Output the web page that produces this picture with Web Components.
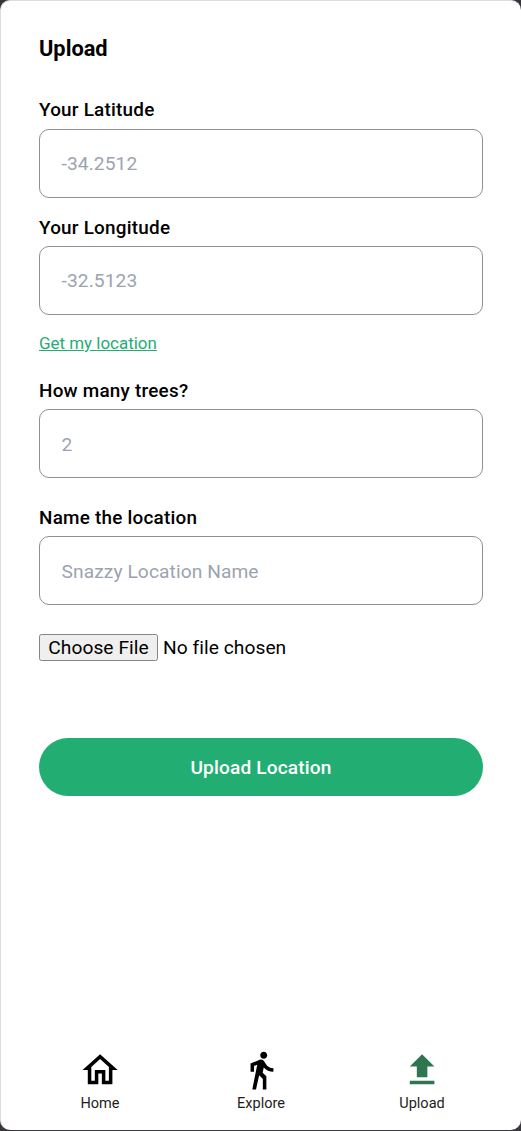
<!DOCTYPE html>
<html lang="en">
<head>
<meta charset="utf-8">
<title>Upload</title>
<style>
html,body{margin:0;height:100%;background:#38363a;font-family:Roboto,"Liberation Sans",sans-serif;color:#000}
</style>
</head>
<body>
<upload-screen></upload-screen>
<script>
function define(name, html){
  const t=document.createElement('template');
  t.innerHTML=html;
  customElements.define(name, class extends HTMLElement{
    constructor(){
      super();
      this.attachShadow({mode:'open'}).appendChild(t.content.cloneNode(true));
    }
  });
}

define('form-field', `
<style>
:host{display:block}
.label{display:block;line-height:22px;margin-bottom:var(--label-gap,7px);font-size:18.9px;font-weight:500;letter-spacing:.23px;white-space:nowrap}
.box{box-sizing:border-box;height:69px;border:1px solid #909090;border-radius:10px;padding:var(--text-drop,0) 0 0 21.6px;display:flex;align-items:center;font-size:19.2px;line-height:23px;letter-spacing:.08px;color:#9ca3af}
</style>
<span class="label"><slot name="label"></slot></span>
<div class="box"><slot></slot></div>`);

define('text-link', `
<style>:host{display:block;font-size:16.95px;line-height:20px;color:#22ae73;text-decoration:underline;white-space:nowrap}</style>
<slot></slot>`);

define('file-picker', `
<style>
:host{display:flex;align-items:center;gap:5px;height:27px;font-size:19.2px;line-height:25px;letter-spacing:.05px;white-space:nowrap}
.btn{box-sizing:border-box;width:119px;height:27px;text-align:center;background:#efefef;border:1px solid #858585;border-radius:2.5px}
</style>
<span class="btn"><slot name="button"></slot></span><span><slot></slot></span>`);

define('primary-button', `
<style>
:host{display:flex;align-items:center;justify-content:center;height:58px;border-radius:29px;background:#22ae73;color:#fff;font-size:19.1px;font-weight:500;letter-spacing:.16px}
</style>
<slot></slot>`);

define('nav-item', `
<style>
:host{display:flex;flex-direction:column;align-items:center;width:161px;font-size:14.5px;line-height:18px;color:#1c1c1c}
::slotted(svg){display:block;width:42.2px;height:42.2px;margin-bottom:4px}
</style>
<slot name="icon"></slot><span><slot></slot></span>`);

define('bottom-nav', `
<style>:host{display:flex;justify-content:center;height:81.5px}</style>
<slot></slot>`);

define('upload-screen', `
<style>
:host{box-sizing:border-box;display:flex;flex-direction:column;height:1130px;width:521px;background:#fff;border:solid #dedede;border-width:1px 0 0 1px;border-radius:10px;overflow:hidden}
main{flex:1;padding:34px 38px 0}
h1{margin:0;font-size:21.8px;line-height:27px;font-weight:700}
.lat{margin-top:37px;--label-gap:8px}
.lng{margin-top:19px}
text-link{margin-top:18px}
.trees{margin-top:27px;--text-drop:2px}
.name{margin-top:29px;--text-drop:2px}
file-picker{margin-top:29px}
primary-button{margin-top:77px}
</style>
<main>
<h1>Upload</h1>
<form-field class="lat"><span slot="label">Your Latitude</span>-34.2512</form-field>
<form-field class="lng"><span slot="label">Your Longitude</span>-32.5123</form-field>
<text-link>Get my location</text-link>
<form-field class="trees"><span slot="label">How many trees?</span>2</form-field>
<form-field class="name"><span slot="label">Name the location</span>Snazzy Location Name</form-field>
<file-picker><span slot="button">Choose File</span>No file chosen</file-picker>
<primary-button>Upload Location</primary-button>
</main>
<bottom-nav>
<nav-item><svg slot="icon" viewBox="0 0 24 24"><path d="M12 5.69l5 4.5V18h-2v-6H9v6H7v-7.81l5-4.5M12 3L2 12h3v8h6v-6h2v6h6v-8h3L12 3z"/></svg>Home</nav-item>
<nav-item><svg slot="icon" viewBox="0 0 24 24"><path d="M13.5 5.5c1.1 0 2-.9 2-2s-.9-2-2-2-2 .9-2 2 .9 2 2 2zM9.8 8.9L7 23h2.1l1.8-8 2.1 2v6h2v-7.5l-2.1-2 .6-3C14.8 12 16.8 13 19 13v-2c-1.9 0-3.5-1-4.3-2.4l-1-1.6c-.4-.6-1-1-1.7-1-.3 0-.5.1-.8.1L6 8.3V13h2V9.6l1.8-.7"/></svg>Explore</nav-item>
<nav-item><svg slot="icon" viewBox="0 0 24 24" fill="#2d7650"><path d="M5 20h14v-2H5v2zM5 10h4v6h6v-6h4l-7-7-7 7z"/></svg>Upload</nav-item>
</bottom-nav>`);
</script>
</body>
</html>
